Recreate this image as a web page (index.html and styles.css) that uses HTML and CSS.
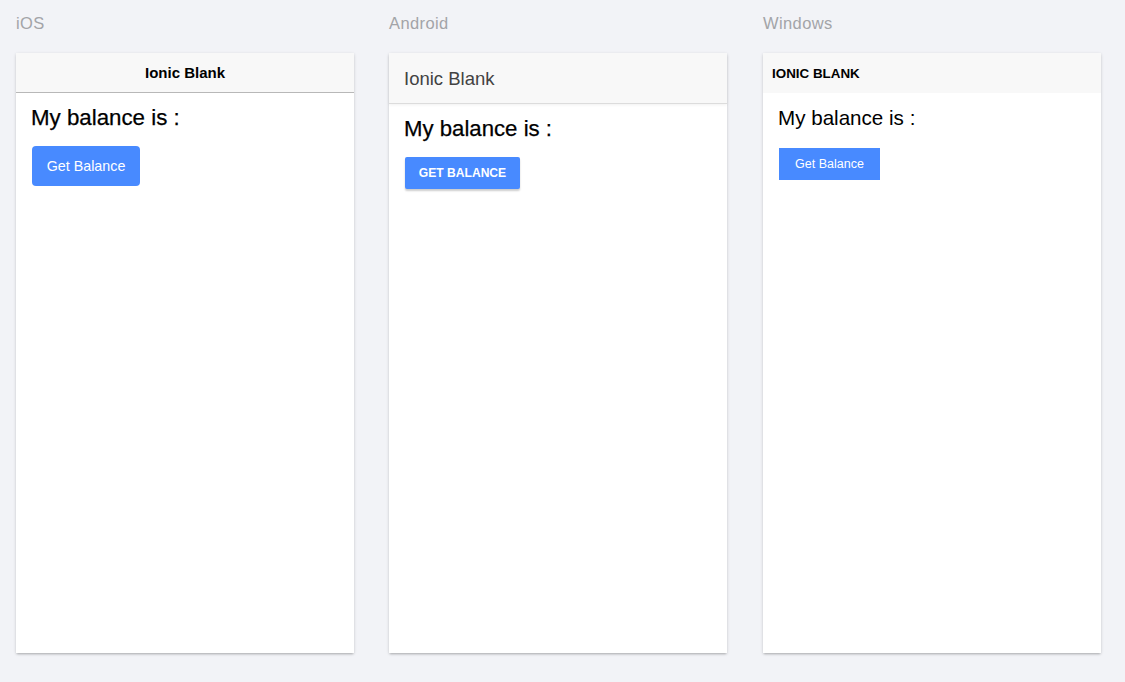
FILE: index.html
```html
<!DOCTYPE html>
<html>
<head>
<meta charset="utf-8">
<link rel="stylesheet" href="styles.css">
</head>
<body>
<div class="preview">
  <section class="platform">
    <div class="label">iOS</div>
    <div class="device">
      <header class="bar bar-ios">Ionic Blank</header>
      <div class="content">
        <h2 class="title title-ios">My balance is :</h2>
        <button class="btn btn-ios">Get Balance</button>
      </div>
    </div>
  </section>
  <section class="platform">
    <div class="label">Android</div>
    <div class="device">
      <header class="bar bar-md">Ionic Blank</header>
      <div class="content">
        <h2 class="title title-md">My balance is :</h2>
        <button class="btn btn-md">Get Balance</button>
      </div>
    </div>
  </section>
  <section class="platform platform-last">
    <div class="label">Windows</div>
    <div class="device">
      <header class="bar bar-wp">Ionic Blank</header>
      <div class="content">
        <h2 class="title title-wp">My balance is :</h2>
        <button class="btn btn-wp">Get Balance</button>
      </div>
    </div>
  </section>
</div>
</body>
</html>
```

FILE: styles.css
```css
html, body {
  margin: 0;
  padding: 0;
  background: #f2f3f7;
  font-family: "Liberation Sans", Arial, sans-serif;
}

.preview {
  display: flex;
  gap: 35px;
  padding-left: 16px;
  padding-bottom: 29px;
}

.platform {
  width: 338px;
  display: flex;
  flex-direction: column;
}

.platform-last {
  margin-left: 1px;
}

.label {
  padding-top: 13px;
  height: 20px;
  line-height: 20px;
  font-size: 16.5px;
  letter-spacing: 0.4px;
  color: #a3a4a8;
  margin-bottom: 20px;
}

.device {
  height: 600px;
  background: #fff;
  box-shadow: 0 1px 3px rgba(0, 0, 0, 0.16), 0 2px 2px -1px rgba(0, 0, 0, 0.18);
  display: flex;
  flex-direction: column;
}

.bar {
  background: #f8f8f8;
  display: flex;
  align-items: center;
  color: #000;
}

.bar-ios {
  height: 39px;
  border-bottom: 1px solid #b8b8b8;
  justify-content: center;
  font-weight: bold;
  font-size: 15px;
}

.bar-md {
  height: 50px;
  padding-left: 15px;
  padding-top: 2px;
  box-sizing: border-box;
  font-size: 18.5px;
  color: #424242;
  box-shadow: 0 1px 0 #dcdcdc, 0 2px 3px rgba(0, 0, 0, 0.06);
  position: relative;
}

.bar-wp {
  height: 40px;
  padding-left: 9px;
  font-weight: bold;
  font-size: 13.4px;
  text-transform: uppercase;
}

.content {
  display: flex;
  flex-direction: column;
  align-items: flex-start;
  padding: 0 15px;
}

.title {
  margin: 0;
  font-weight: normal;
  color: #000;
  -webkit-text-stroke: 0.25px #000;
}

.title-ios {
  font-size: 22.3px;
  line-height: 26px;
  margin-top: 12px;
}

.title-md {
  font-size: 22.2px;
  line-height: 26px;
  margin-top: 13px;
}

.title-wp {
  font-size: 20.6px;
  line-height: 24px;
  margin-top: 12.5px;
  -webkit-text-stroke: 0;
}

.btn {
  border: none;
  background: #488aff;
  color: #fff;
  font-family: "Liberation Sans", Arial, sans-serif;
  padding: 0;
  margin-left: 1px;
  display: flex;
  align-items: center;
  justify-content: center;
}

.btn-ios {
  width: 108px;
  height: 40px;
  border-radius: 4px;
  font-size: 14.3px;
  margin-top: 15px;
}

.btn-md {
  width: 115px;
  height: 32px;
  border-radius: 2px;
  font-size: 12.1px;
  font-weight: bold;
  text-transform: uppercase;
  margin-top: 14.5px;
  box-shadow: 0 2px 2px rgba(0, 0, 0, 0.2);
}

.btn-wp {
  width: 101px;
  height: 32px;
  border-radius: 0;
  font-size: 12.5px;
  margin-top: 18.4px;
}
```
